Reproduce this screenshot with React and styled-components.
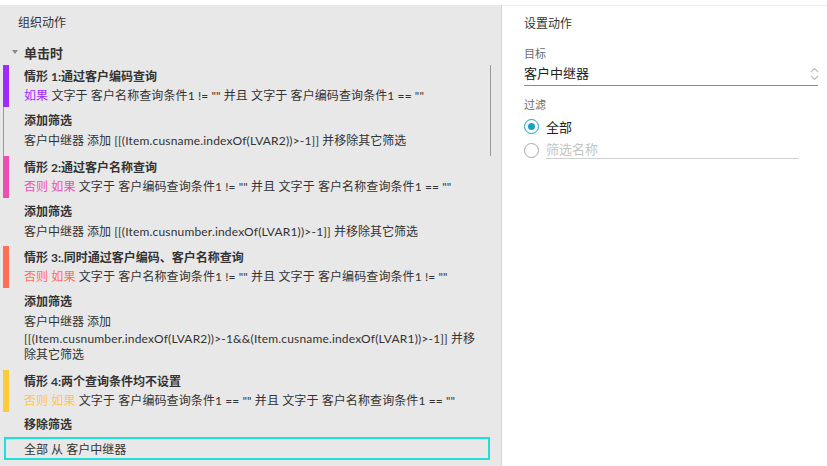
import React from "react";
import styled, { createGlobalStyle } from "styled-components";

const Global = createGlobalStyle`
  html, body { margin: 0; padding: 0; background: #fff; }
  body { font-family: "Lato", "Noto Sans CJK SC", sans-serif; color: #333; }
  * { box-sizing: border-box; }
`;

const Page = styled.div`
  width: 827px;
  height: 466px;
  display: flex;
  flex-direction: column;
  overflow: hidden;
`;

const TopStrip = styled.div`
  height: 5px;
  background: #fff;
`;

const Main = styled.div`
  flex: 1;
  display: flex;
  min-height: 0;
`;

const LeftPanel = styled.div`
  width: 502px;
  background: #e8e8e8;
  border-right: 1px solid #d6d6d6;
  display: flex;
  flex-direction: column;
`;

const PanelTitle = styled.div`
  font-size: 12px;
  line-height: 18px;
  color: #333;
  padding: 9px 0 0 ${p => p.$indent}px;
`;

const EventRow = styled.div`
  margin-top: 10px;
  height: 20px;
  display: flex;
  align-items: center;
  padding-left: 12px;
  font-size: 13px;
  font-weight: 700;
  color: #333;
`;

const Caret = styled.span`
  width: 0;
  height: 0;
  border-left: 3px solid transparent;
  border-right: 3px solid transparent;
  border-top: 4px solid #8a8a8a;
  margin-right: 6px;
`;

const CaseList = styled.div`
  margin-top: 3px;
  display: flex;
  flex-direction: column;
`;

const CaseWrap = styled.div`
  margin-left: 3px;
  width: 488px;
  border-left: 1px solid ${p => (p.$selected ? "#9a9a9a" : "transparent")};
  border-right: 1px solid ${p => (p.$selected ? "#9a9a9a" : "transparent")};
`;

const CaseHeader = styled.div`
  margin-left: -1px;
  border-left: 6px solid ${p => p.$color};
  padding: 2px 8px 2px 15px;
`;

const CaseTitle = styled.div`
  font-size: 12px;
  font-weight: 700;
  line-height: 19px;
  color: #333;
  white-space: nowrap;
`;

const Cond = styled.div`
  font-size: 12px;
  line-height: 19px;
  color: #333;
  white-space: nowrap;
  letter-spacing: 0.1px;
`;

const Keyword = styled.span`
  color: ${p => p.$color};
`;

const Actions = styled.div`
  padding: ${p => (p.$last ? "3px 8px 0 20px" : "4px 8px 6px 20px")};
`;

const ActionLabel = styled.div`
  font-size: 12px;
  font-weight: 700;
  line-height: 20px;
  color: #333;
`;

const ActionText = styled.div`
  margin-top: 2px;
  font-size: 12px;
  line-height: 16.5px;
  color: #333;
`;

const Code = styled.span`
  white-space: nowrap;
  letter-spacing: 0.17px;
`;

const SelectedAction = styled.div`
  margin: 2px 0 0 4px;
  width: 486px;
  height: 23px;
  border: 2px solid #1ee0da;
  padding-left: 18px;
  display: flex;
  align-items: center;
  font-size: 12px;
  color: #333;
`;

const RightPanel = styled.div`
  flex: 1;
  background: #fff;
  border-top: 1px solid #ececec;
  padding-left: 22px;
  display: flex;
  flex-direction: column;
`;

const FieldLabel = styled.div`
  font-size: 11px;
  line-height: 16px;
  color: #6a6a6a;
  margin-top: ${p => p.$mt}px;
`;

const Select = styled.div`
  width: 294px;
  height: 24px;
  border-bottom: 1px solid #8a8a8a;
  display: flex;
  align-items: center;
  justify-content: space-between;
  font-size: 13px;
  color: #222;
  padding-bottom: 3px;
`;

const ChevronIcon = styled.svg`
  margin: 3px -1px 0 0;
`;

const RadioRow = styled.div`
  display: flex;
  align-items: center;
  height: 22px;
  margin-top: ${p => p.$mt}px;
`;

const Radio = styled.span`
  width: 15px;
  height: 15px;
  border-radius: 50%;
  border: 1.5px solid ${p => (p.$checked ? "#1b9fc6" : "#a8a8a8")};
  display: flex;
  align-items: center;
  justify-content: center;
  margin-right: 7px;
  background: #fff;
  &::after {
    content: "";
    width: 7px;
    height: 7px;
    border-radius: 50%;
    background: ${p => (p.$checked ? "#1b9fc6" : "transparent")};
  }
`;

const RadioText = styled.span`
  font-size: 13px;
  color: #222;
`;

const FilterInput = styled.div`
  width: 253px;
  height: 20px;
  border-bottom: 1px solid #cfcfcf;
  font-size: 13px;
  color: #c4c4c4;
  display: flex;
  align-items: center;
  margin-top: -2px;
`;

const Chevron = () => (
  <ChevronIcon width="9" height="14" viewBox="0 0 9 14">
    <path d="M1 5 L4.5 1.5 L8 5" fill="none" stroke="#bdbdbd" strokeWidth="1.1" />
    <path d="M1 9 L4.5 12.5 L8 9" fill="none" stroke="#bdbdbd" strokeWidth="1.1" />
  </ChevronIcon>
);

const cases = [
  {
    color: "#a12bff",
    title: "情形 1:通过客户编码查询",
    kw: "如果",
    cond: " 文字于 客户名称查询条件1 != \"\" 并且 文字于 客户编码查询条件1 == \"\"",
    label: "添加筛选",
    pre: "客户中继器 添加 ",
    code: "[[(Item.cusname.indexOf(LVAR2))>-1]]",
    post: " 并移除其它筛选",
    selected: true,
  },
  {
    color: "#ec4fb0",
    title: "情形 2:通过客户名称查询",
    kw: "否则 如果",
    cond: " 文字于 客户编码查询条件1 != \"\" 并且 文字于 客户名称查询条件1 == \"\"",
    label: "添加筛选",
    pre: "客户中继器 添加 ",
    code: "[[(Item.cusnumber.indexOf(LVAR1))>-1]]",
    post: " 并移除其它筛选",
  },
  {
    color: "#ff6f55",
    title: "情形 3:.同时通过客户编码、客户名称查询",
    kw: "否则 如果",
    cond: " 文字于 客户名称查询条件1 != \"\" 并且 文字于 客户编码查询条件1 != \"\"",
    label: "添加筛选",
    pre: "客户中继器 添加 ",
    code: "[[(Item.cusnumber.indexOf(LVAR2))>-1&&(Item.cusname.indexOf(LVAR1))>-1]]",
    post: " 并移除其它筛选",
  },
  {
    color: "#ffc93c",
    title: "情形 4:两个查询条件均不设置",
    kw: "否则 如果",
    cond: " 文字于 客户编码查询条件1 == \"\" 并且 文字于 客户名称查询条件1 == \"\"",
    label: "移除筛选",
    last: true,
  },
];

export default function App() {
  return (
    <Page>
      <Global />
      <TopStrip />
      <Main>
        <LeftPanel>
          <PanelTitle $indent={18}>组织动作</PanelTitle>
          <EventRow>
            <Caret />
            单击时
          </EventRow>
          <CaseList>
            {cases.map((c, i) => (
              <CaseWrap key={i} $selected={c.selected}>
                <CaseHeader $color={c.color}>
                  <CaseTitle>{c.title}</CaseTitle>
                  <Cond>
                    <Keyword $color={c.color}>{c.kw}</Keyword>
                    {c.cond}
                  </Cond>
                </CaseHeader>
                <Actions $last={c.last}>
                  <ActionLabel>{c.label}</ActionLabel>
                  {c.code && (
                    <ActionText>
                      {c.pre}
                      <Code>{c.code}</Code>
                      {c.post}
                    </ActionText>
                  )}
                </Actions>
              </CaseWrap>
            ))}
            <SelectedAction>全部 从 客户中继器</SelectedAction>
          </CaseList>
        </LeftPanel>
        <RightPanel>
          <PanelTitle $indent={0}>设置动作</PanelTitle>
          <FieldLabel $mt={13}>目标</FieldLabel>
          <Select>
            <span>客户中继器</span>
            <Chevron />
          </Select>
          <FieldLabel $mt={11}>过滤</FieldLabel>
          <RadioRow $mt={2}>
            <Radio $checked />
            <RadioText>全部</RadioText>
          </RadioRow>
          <RadioRow $mt={2}>
            <Radio />
            <FilterInput>筛选名称</FilterInput>
          </RadioRow>
        </RightPanel>
      </Main>
    </Page>
  );
}
